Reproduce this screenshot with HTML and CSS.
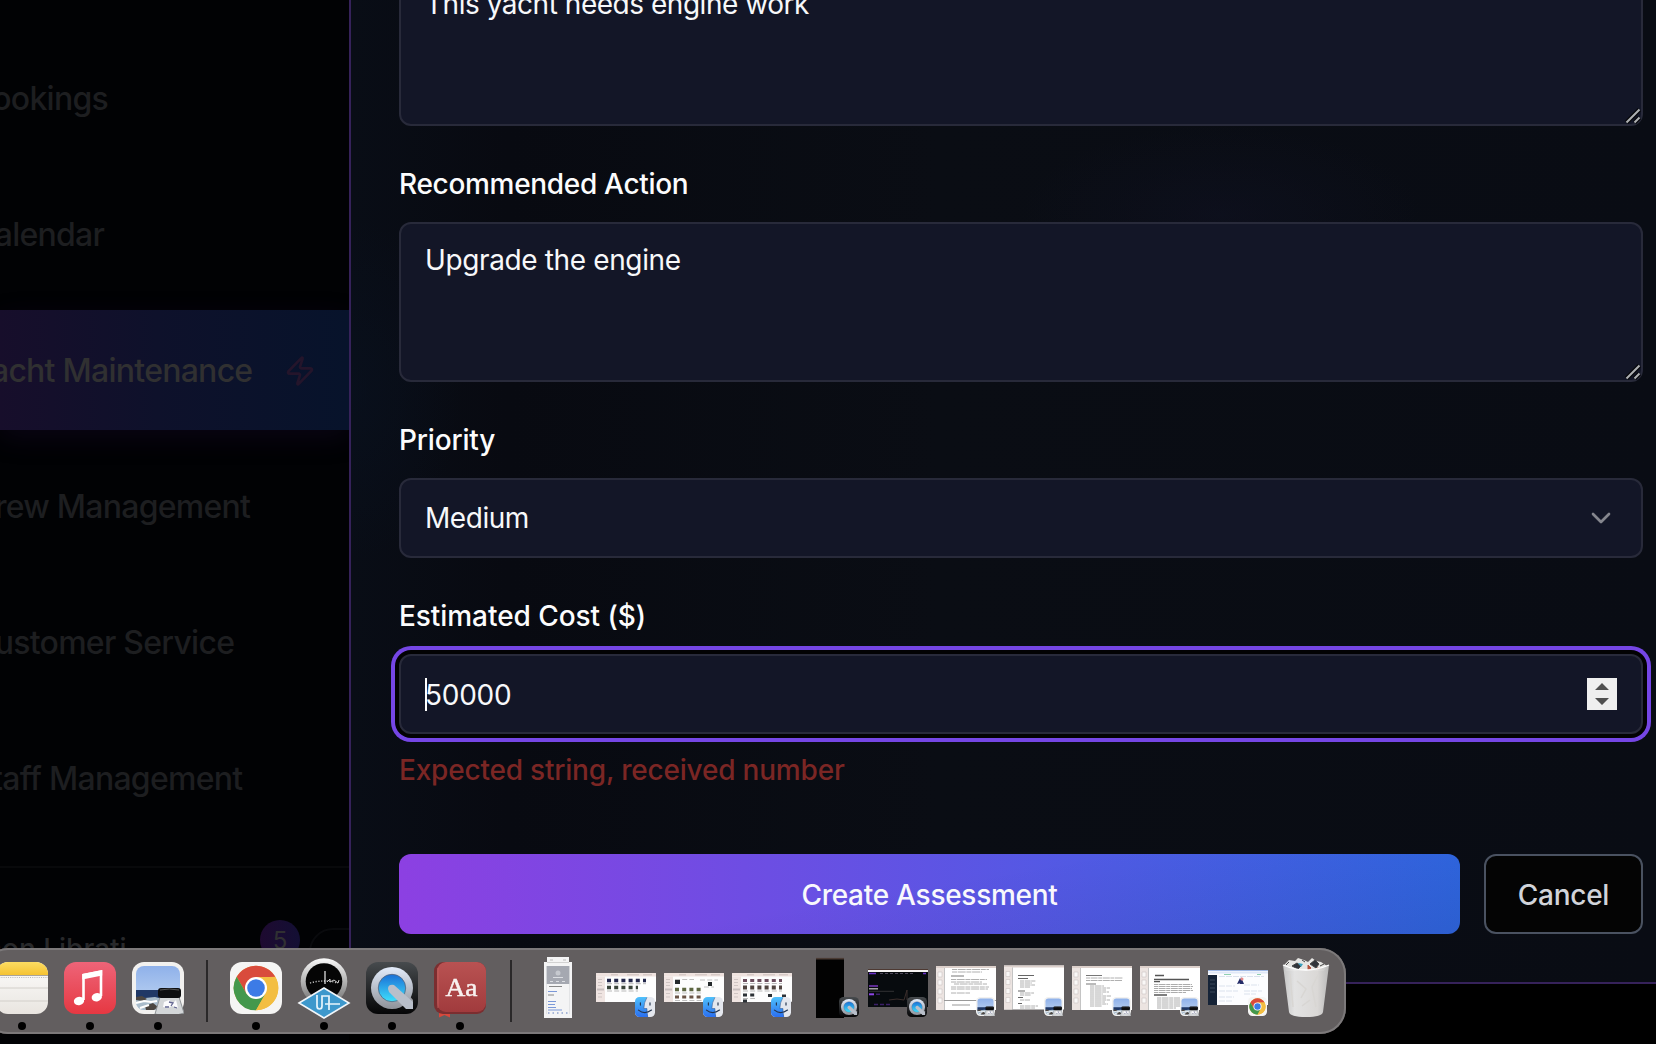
FILE: index.html
```html
<!DOCTYPE html>
<html lang="en">
<head>
<meta charset="utf-8">
<title>Yacht Maintenance</title>
<link rel="stylesheet" href="styles.css">
</head>
<body>
<svg class="defs" width="0" height="0" aria-hidden="true">
  <defs>
    <linearGradient id="gMusic" x1="0" y1="0" x2="0" y2="1"><stop offset="0" stop-color="#ee6478"/><stop offset="1" stop-color="#e63842"/></linearGradient>
    <linearGradient id="gNote" x1="0" y1="0" x2="0" y2="1"><stop offset="0" stop-color="#fcdc62"/><stop offset="1" stop-color="#f5c332"/></linearGradient>
    <linearGradient id="gPaper" x1="0" y1="0" x2="0" y2="1"><stop offset="0" stop-color="#fdfdfc"/><stop offset="1" stop-color="#e9e5e0"/></linearGradient>
    <linearGradient id="gSky" x1="0" y1="0" x2="0" y2="1"><stop offset="0" stop-color="#8fb1ea"/><stop offset="1" stop-color="#c3d8f2"/></linearGradient>
    <linearGradient id="gQtBg" x1="0" y1="0" x2="0" y2="1"><stop offset="0" stop-color="#474b4e"/><stop offset="1" stop-color="#050506"/></linearGradient>
    <linearGradient id="gQtRing" x1="0" y1="0" x2="0" y2="1"><stop offset="0" stop-color="#e3ecfb"/><stop offset="1" stop-color="#8f9299"/></linearGradient>
    <linearGradient id="gQtBlue" x1="0" y1="0" x2="0" y2="1"><stop offset="0" stop-color="#1a6fd6"/><stop offset="1" stop-color="#3fe0fb"/></linearGradient>
    <linearGradient id="gFinder" x1="0" y1="0" x2="0" y2="1"><stop offset="0" stop-color="#4fc1fb"/><stop offset="1" stop-color="#2a6ff0"/></linearGradient>
    <linearGradient id="gDial" x1="0" y1="0" x2="0" y2="1"><stop offset="0" stop-color="#fafafa"/><stop offset="1" stop-color="#6c6c6c"/></linearGradient>
    <linearGradient id="gBook" x1="0" y1="0" x2="0" y2="1"><stop offset="0" stop-color="#b95252"/><stop offset="1" stop-color="#a13b3d"/></linearGradient>
    <linearGradient id="gCan" x1="0" y1="0" x2="1" y2="0"><stop offset="0" stop-color="#c9c9c9"/><stop offset=".25" stop-color="#e8e8e8"/><stop offset=".75" stop-color="#dfdddb"/><stop offset="1" stop-color="#bdbdbd"/></linearGradient>

    <symbol id="chrome" viewBox="0 0 52 52">
      <rect width="52" height="52" rx="12" fill="#f5f5f4"/>
      <circle cx="26" cy="26" r="22.3" fill="#f3be42"/>
      <path d="M6.7 14.8A22.3 22.3 0 0 1 45.3 14.8L26 15.5 16 31z" fill="#d94b3c"/>
      <path d="M6.7 14.8A22.3 22.3 0 0 0 26 48.3L35.5 31.5 26 36.5 16.6 32z" fill="#43984c"/>
      <path d="M26 15H45.4A22.3 22.3 0 0 1 26 48.3L36 31z" fill="#f3be42"/>
      <circle cx="26" cy="26" r="11" fill="#fff"/><circle cx="26" cy="26" r="8.8" fill="#3c7be6"/>
    </symbol>
    <symbol id="preview" viewBox="0 0 52 52">
      <rect width="52" height="52" rx="12" fill="#f2f1ef"/>
      <rect x="4" y="4" width="44" height="44" rx="8" fill="url(#gSky)"/>
      <path d="M4 28H48V37H4z" fill="#203866"/>
      <path d="M4 35l9 1 10-1 8 2 17-1v4a8 8 0 0 1-8 8H12a8 8 0 0 1-8-8z" fill="#a9bccb"/>
      <path d="M4 35l6-1 5 3-4 2-7-1zM13 44l8-3 5 4-4 3h-8z" fill="#4c4641"/>
      <path d="M4 41l8-2 7 1 6-1M8 46l9-3" stroke="#fff" stroke-width="2" fill="none"/>
      <path d="M28 35h19l5 16q-14 5-29 1z" fill="#d3d6d8" stroke="#8f9396" stroke-width="1"/>
      <path d="M32 40l5-2 4 3 3-3 2 8-6-2-4 2-5-1z" fill="#fbfbfd"/><path d="M37 40l4 1-2 3M33 45h4M42 45l3 1" stroke="#626590" stroke-width="1.3" fill="none"/>
      <rect x="26" y="26" width="23" height="10" rx="3" fill="#0d0e10"/><path d="M28 28q9-2 19 0" stroke="#555" stroke-width="1" fill="none"/>
    </symbol>
    <symbol id="quicktime" viewBox="0 0 52 52">
      <rect width="52" height="52" rx="12" fill="url(#gQtBg)"/>
      <path d="M30 32l7-6 10 12v9h-6z" fill="#9a9ca2"/>
      <circle cx="26" cy="26" r="21" fill="url(#gQtRing)"/>
      <circle cx="26" cy="26" r="13.7" fill="url(#gQtBlue)" stroke="#56657c" stroke-width=".8"/>
      <path d="M22 27q0-5 6-4l19 17v7h-7L23 30z" fill="#b9bfca"/>
    </symbol>
    <symbol id="finder" viewBox="0 0 52 52">
      <rect width="52" height="52" rx="12" fill="#e4e7ee"/>
      <path d="M12 0H31Q23 14 23 30H31Q31 42 34 52H12A12 12 0 0 1 0 40V12A12 12 0 0 1 12 0z" fill="url(#gFinder)"/>
      <path d="M14 15v6M39 15v6M9 34Q25 47 43 34" stroke="#22334e" stroke-width="3" stroke-linecap="round" fill="none"/>
      <path d="M31 1Q23 15 23 30H31Q31 41 33 51" stroke="#345b94" stroke-width="1.5" fill="none"/>
    </symbol>
    <symbol id="grip" viewBox="0 0 16 16">
      <path d="M1.5 14.5L14.5 1.5M9.5 14.5l5-5" stroke="#07080c" stroke-width="4.5"/>
      <path d="M1.5 14.5L14.5 1.5M9.5 14.5l5-5" stroke="#aeb0b3" stroke-width="2"/>
    </symbol>
    <symbol id="window" viewBox="0 0 60 29">
      <rect width="60" height="29" rx="1" fill="#fdfdfd"/><path d="M0 1q0-1 1-1h58q1 0 1 1v2.5H0z" fill="#efe3df"/><path d="M0 3.500H9V29H0z" fill="#efe4e1"/>
      <path d="M2 6.500H6M2 9.500H6M2 12.500H6M2 20.500H6M2 24H6" stroke="#cfc5c3" stroke-width="1"/><path d="M1 16.500H8" stroke="#c8bfbe" stroke-width="2"/><path d="M15 1.800h7M31 1.800h12M47 1.800h9" stroke="#c2b7b4" stroke-width=".8"/>
    </symbol>
    <symbol id="doc" viewBox="0 0 60 44">
      <rect width="60" height="44" fill="#fff"/><path d="M0 0H60V2H0z" fill="#dcd0cb"/><path d="M0 2H8V44H0z" fill="#ece4e1"/><path d="M2 6h4v5H2zM2 14h4v5H2zM2 23h4v5H2zM2 32h4v5H2z" fill="#faf8f7" stroke="#cdc5c2" stroke-width=".6"/><path d="M8.500 2V44" stroke="#aaa" stroke-width=".7"/>
    </symbol>
  </defs>
</svg>

<div class="screen">
  <aside class="sidebar">
    <nav class="nav">
      <div class="nav-item">Bookings</div>
      <div class="nav-item">Calendar</div>
      <div class="nav-item active"><span>Yacht Maintenance</span>
        <svg class="zap" viewBox="0 0 24 24" fill="none" stroke="currentColor" stroke-width="2" stroke-linecap="round" stroke-linejoin="round"><path d="M4 14a1 1 0 0 1-.78-1.630l9.900-10.200a.5.5 0 0 1 .86.460l-1.920 6.020A1 1 0 0 0 13 10h7a1 1 0 0 1 .78 1.630l-9.900 10.200a.5.5 0 0 1-.86-.460l1.920-6.020A1 1 0 0 0 11 14z"/></svg>
      </div>
      <div class="nav-item">Crew Management</div>
      <div class="nav-item">Customer Service</div>
      <div class="nav-item">Staff Management</div>
    </nav>
    <div class="account">
      <span class="account-name">Simon Librati</span>
      <span class="count">5</span>
      <span class="pill"></span>
    </div>
  </aside>

  <main class="dialog">
    <div class="box area first">This yacht needs engine work<svg class="grip"><use href="#grip"/></svg></div>
    <div class="label action">Recommended Action</div>
    <div class="box area">Upgrade the engine<svg class="grip"><use href="#grip"/></svg></div>
    <div class="label priority">Priority</div>
    <div class="box line"><span>Medium</span>
      <svg class="chevron" viewBox="0 0 24 24" fill="none" stroke="#85868e" stroke-width="2" stroke-linecap="round" stroke-linejoin="round"><path d="m6 9 6 6 6-6"/></svg>
    </div>
    <div class="label">Estimated Cost ($)</div>
    <div class="box line focused"><span class="number">50000</span>
      <svg class="spinner" viewBox="0 0 30 32"><rect width="30" height="32" fill="#efefef"/><path d="M8 12l7-7 7 7zM8 20h14l-7 7z" fill="#505050"/></svg>
    </div>
    <p class="error">Expected string, received number</p>
    <div class="actions">
      <div class="button primary">Create Assessment</div>
      <div class="button secondary">Cancel</div>
    </div>
  </main>
</div>

<div class="dock">
  <svg class="app" viewBox="0 0 68 86"><rect x="8" y="14" width="52" height="52" rx="12" fill="url(#gPaper)"/><path d="M8 27V26A12 12 0 0 1 20 14H48A12 12 0 0 1 60 26V27z" fill="url(#gNote)"/><path d="M8 27.500H60" stroke="#a9a49b"/><path d="M9 29.500H60" stroke="#bbb" stroke-width="1.200" stroke-dasharray="1 1.200"/><path d="M8 40H60M8 53H60" stroke="#d2cfca"/><circle cx="34" cy="78" r="4"/></svg>
  <svg class="app" viewBox="0 0 68 86"><rect x="8" y="14" width="52" height="52" rx="12" fill="url(#gMusic)"/><path d="M27.500 52V27L45 23.500V48" stroke="#fff" stroke-width="2.600" fill="none"/><path d="M26.300 26L46.200 22V27.500L26.300 31.500z" fill="#fff"/><ellipse cx="23" cy="53" rx="5.200" ry="4.200" transform="rotate(-15 23 53)" fill="#fff"/><ellipse cx="40.800" cy="49.200" rx="5.200" ry="4.200" transform="rotate(-15 40.800 49.200)" fill="#fff"/><circle cx="34" cy="78" r="4"/></svg>
  <svg class="app" viewBox="0 0 68 86"><use href="#preview" x="8" y="14" width="52" height="52"/><circle cx="34" cy="78" r="4"/></svg>
  <span class="divider"></span>
  <svg class="app" viewBox="0 0 68 86"><use href="#chrome" x="8" y="14" width="52" height="52"/><circle cx="34" cy="78" r="4"/></svg>
  <svg class="app" viewBox="0 0 68 86"><circle cx="34" cy="33.500" r="23.300" fill="url(#gDial)"/><circle cx="34" cy="33.500" r="18.300" fill="#050505"/><path d="M20 35Q34 31 48 35" stroke="#bbb" stroke-width="1.400" stroke-dasharray="1.200 1.600" fill="none"/><path d="M35 23V36" stroke="#eee" stroke-width="1.200"/><path d="M37 34l3-3v3l4-2 4 3 1-3" stroke="#ccc" fill="none"/><path d="M9 55L34 40 59 55 34 70z" fill="#3d98cc" stroke="#f1f6fa" stroke-width="1.600"/><path d="M27 47V58Q27 61 29.500 61T32 58V48H39V62M35 56H50" stroke="#e8f5fc" stroke-width="1.700" fill="none"/><circle cx="34" cy="78" r="4"/></svg>
  <svg class="app" viewBox="0 0 68 86"><use href="#quicktime" x="8" y="14" width="52" height="52"/><circle cx="34" cy="78" r="4"/></svg>
  <svg class="app" viewBox="0 0 68 86"><path d="M13 60H24V69.500L18.500 67 13 69.500z" fill="#d8483c"/><rect x="8" y="14" width="52" height="52" rx="9" fill="#7b2e30"/><rect x="11" y="14" width="49" height="50" rx="9" fill="url(#gBook)"/><path d="M12 20V60" stroke="#c46663" stroke-width=".8"/><text x="35.500" y="48" text-anchor="middle" textLength="32" lengthAdjust="spacingAndGlyphs" class="book-text">Aa</text><circle cx="34" cy="78" r="4"/></svg>
  <span class="divider windows"></span>
  <svg class="app" viewBox="0 0 68 86"><path d="M23 9H45V14H48V70H20V14H23z" fill="#f4f4f5"/><path d="M23 14.500H45" stroke="#c9c9c9" stroke-width=".8"/><path d="M26 12H42" stroke="#bbb" stroke-dasharray="3 10"/><path d="M22.500 18H45.500V36H22.500z" fill="#a5a8b1"/><circle cx="34" cy="25" r="2.500" fill="#c6c9cf"/><path d="M29 29.500h10M26 33.500h3M32 33.500h3M38 33.500h3" stroke="#dcdee3"/><path d="M25 38.500H38M24 47H30" stroke="#888"/><path d="M24 43.500H33M24 53.500H32M24 56.500H31M24 59.500H32M24 62H38" stroke="#7b98d8"/><path d="M24 65H44" stroke="#8fa3d0" stroke-width="1.500" stroke-dasharray="1.500 3"/><path d="M22.500 18V66M45.500 18V66" stroke="#d6d8dc" stroke-width=".6"/></svg>
  <svg class="app" viewBox="0 0 68 86"><use href="#window" x="4" y="25" width="60" height="29"/><path d="M15 32.500H54" stroke="#22264a" stroke-width="3.500" stroke-dasharray="4 3.200"/><path d="M15 39.500H46" stroke="#3a443a" stroke-width="3.500" stroke-dasharray="4 3.200"/><path d="M15 35.700H54M15 43H46" stroke="#b9b9b9" stroke-dasharray="5 2.200"/><use href="#finder" x="43" y="49" width="20" height="20"/></svg>
  <svg class="app" viewBox="0 0 68 86"><use href="#window" x="4" y="25" width="60" height="29"/><path d="M15 34H20M48 36H52" stroke="#252a2c" stroke-width="4"/><path d="M15 41.500H41" stroke="#5d6641" stroke-width="3.500" stroke-dasharray="4 3.200"/><path d="M15 49H42" stroke="#6b5547" stroke-width="3" stroke-dasharray="4 3.200"/><path d="M15 31.500H34M40 32H58M15 45H41M15 52.500H42M44 39H54" stroke="#bfbfbf" stroke-dasharray="5 2.200"/><use href="#finder" x="43" y="49" width="20" height="20"/></svg>
  <svg class="app" viewBox="0 0 68 86"><use href="#window" x="4" y="25" width="60" height="29"/><path d="M15 32.500H54" stroke="#6b4c5c" stroke-width="3" stroke-dasharray="4 3.200"/><path d="M15 39.500H54" stroke="#514540" stroke-width="4" stroke-dasharray="4 3.200"/><path d="M15 47H27M15 53H20M40 47.500H44M54 48H58" stroke="#2c3136" stroke-width="3" stroke-dasharray="4 3.200"/><path d="M15 35.500H54M15 43H54M15 50.500H27" stroke="#b9b9b9" stroke-dasharray="5 2.200"/><use href="#finder" x="43" y="49" width="20" height="20"/></svg>
  <svg class="app" viewBox="0 0 68 86"><path d="M20 10H48V70H20z" fill="#020202"/><path d="M20 10.700H48" stroke="#4a3b33" stroke-width="1.600"/><use href="#quicktime" x="43" y="49" width="20" height="20"/></svg>
  <svg class="app" viewBox="0 0 68 86"><path d="M4 21H64V59H4z" fill="#070b0e"/><path d="M4 21.500H64" stroke="#4d3932"/><path d="M4 23H64" stroke="#f6f4f3" stroke-width="2"/><path d="M5 25.500h7M59 25.500h3" stroke="#6b31c9" stroke-width="1.500"/><path d="M16 25.500H50" stroke="#4d4858" stroke-dasharray="3 2"/><path d="M5 38H14" stroke="#5c2c92" stroke-width="2"/><path d="M5 40.800H14" stroke="#bbb" stroke-width="1.300"/><path d="M5 43.300H30" stroke="#444" stroke-width=".7"/><path d="M5 46.300H10" stroke="#8d44e7" stroke-width="2"/><path d="M12 46.300H18M10 56.500H28" stroke="#3b1f68" stroke-width="1.500" stroke-dasharray="4 2"/><path d="M25 52l8-1 7 1 3-10v10l10-1 7 2" stroke="#3b2e2c" fill="none"/><use href="#quicktime" x="43" y="49" width="20" height="20"/></svg>
  <svg class="app" viewBox="0 0 68 86"><use href="#doc" x="4" y="18" width="60" height="44"/><g stroke="#b0b0b0" stroke-dasharray="5 .7 8 .7"><path d="M20 21.500H57M20 24H50M19 31.500H55M19 34H50M22 36H55M19 39H57M19 41H56M19 45H38"/></g><path d="M19 28H32" stroke="#777"/><path d="M12 52.500H64" stroke="#999"/><path d="M20 57H38" stroke="#999"/><use href="#preview" x="44" y="49" width="19" height="19"/></svg>
  <svg class="app" viewBox="0 0 68 86"><use href="#doc" x="4" y="17" width="60" height="45"/><path d="M18 27.500H34M18 30.500H28M18 43H25M18 49.500H23M18 55.500H22" stroke="#666" stroke-width="1.200"/><path d="M20 33H36M20 35H32M20 37H35M20 39H30M20 45H34M20 47H31M20 52H30M20 58H38M20 60H35" stroke="#b0b0b0" stroke-dasharray="4 .6 6 .6"/><use href="#preview" x="44" y="49" width="19" height="19"/></svg>
  <svg class="app" viewBox="0 0 68 86"><use href="#doc" x="4" y="18" width="60" height="44"/><path d="M18 27.500H34M18 36H28" stroke="#777"/><path d="M18 30H55M18 32.500H54M22 38H36M22 40H42M22 42H38M22 44H41M22 46H35M22 48H43M22 50H38M22 52H42M22 54H37M22 56H40M22 58H34" stroke="#b0b0b0" stroke-dasharray="4 .6 7 .6"/><use href="#preview" x="44" y="49" width="19" height="19"/></svg>
  <svg class="app" viewBox="0 0 68 86"><use href="#doc" x="4" y="18" width="60" height="44"/><path d="M19 27.500H28M18 31.500H53M18 33.700H24M18 47H31" stroke="#555" stroke-width="1.300"/><path d="M18 36.500H56M18 38.500H57M18 40.500H56M18 42.500H57M18 44.500H50M21 50H44M21 52H44M21 54H44M21 56H44M21 58H44M21 60H40" stroke="#acacac" stroke-dasharray="4 .6 7 .6"/><use href="#preview" x="44" y="49" width="19" height="19"/></svg>
  <svg class="app" viewBox="0 0 68 86"><path d="M4 22H64V57H4z" fill="#fcfdff"/><path d="M4 22.500H64" stroke="#9db7e4"/><path d="M4 24.500H64" stroke="#dfe8f8" stroke-width="2"/><path d="M4 27H13V57H4z" fill="#152337"/><path d="M6 32h5M6 36h5M6 40h5M6 44h5" stroke="#3b485b"/><path d="M15 28.500H60M15 38H31M15 43H34M15 49H30M15 53H28M40 37H55M40 43H58M40 46H52" stroke="#dbe2ed" stroke-dasharray="6 1"/><path d="M20 26.500h7M53 26.500h4" stroke="#8fd0b0"/><path d="M33 36l3-6 2 5zM37 29l3 7h-4" fill="#242c68"/><circle cx="38" cy="31" r="1.500" fill="#e78a8a"/><use href="#chrome" x="44" y="49" width="19" height="19"/></svg>
  <svg class="app" viewBox="0 0 68 86"><path d="M12 17l5-5 6 1 3-3 6 2 4 2 4-4 4 3 5 1 6 4-3 5H14z" fill="#e6e5e3"/><path d="M20 18l5-3 4 3-3 3zM38 16l5-4 4 4-3 4zM14 17l3-3M30 12l3 2M48 18l4-2" fill="#30343a" stroke="#444" stroke-width="1"/><path d="M26 15l5 1-2 3z" fill="#38a0bf"/><path d="M36 17l3 3-3 2zM45 20l4 1" fill="#b4523d" stroke="#b4523d"/><path d="M11 17Q34 27 57 17L51 64Q50 69 34 69T17 64z" fill="url(#gCan)" fill-opacity=".96"/><path d="M11 17Q34 27 57 17" stroke="#fff" stroke-width="1.300" fill="none"/><path d="M18 26l3 33M25 33l9 8-5 9M46 27l-6 12 4 20M30 58l8-6" stroke="#d8d6d3" stroke-width="1.500" fill="none"/></svg>
</div>
</body>
</html>
```

FILE: styles.css
```css
* { box-sizing: border-box; }

body {
  margin: 0;
  background: #000;
  font-family: Inter, "Liberation Sans", sans-serif;
  overflow: hidden;
}

.defs { position: absolute; }

.screen {
  display: flex;
  width: 1656px;
  height: 1044px;
  overflow: hidden;
}

/* Dimmed sidebar behind the dialog */
.sidebar {
  width: 349px;
  flex: none;
  height: 1044px;
  background: #010204;
  overflow: hidden;
}

.nav {
  display: flex;
  flex-direction: column;
  gap: 16px;
  height: 866px;
  padding-top: 38px;
}

.nav-item {
  display: flex;
  align-items: center;
  justify-content: space-between;
  flex: none;
  height: 120px;
  padding: 1px 33px 0 0;
  text-indent: -28px;
  font-size: 32px;
  font-weight: 500;
  letter-spacing: -.74px;
  white-space: nowrap;
  color: #1d1e20;
}

.active {
  color: #303031;
  background: linear-gradient(90deg, #170e2b, #0e112b 45%, #07132b);
  box-shadow: 0 8px 26px rgba(50, 20, 85, .2);
}

.zap { width: 32px; height: 32px; color: #24152b; }

.account {
  display: flex;
  align-items: flex-start;
  height: 178px;
  border-top: 2px solid #08090b;
}

.account-name {
  flex: none;
  width: 260px;
  margin-top: 61px;
  text-indent: -48px;
  font-size: 28px;
  line-height: 40px;
  font-weight: 500;
  white-space: nowrap;
  color: #28292b;
}

.count {
  flex: none;
  width: 40px;
  height: 40px;
  margin-top: 52px;
  border-radius: 50%;
  background: linear-gradient(90deg, #1e0a30, #130f34);
  font-size: 24px;
  line-height: 41px;
  text-align: center;
  color: #303032;
}

.pill {
  flex: none;
  width: 90px;
  height: 64px;
  margin: 60px 0 0 9px;
  border: 2px solid #090a0d;
  border-radius: 24px;
}

/* Assessment form */
.dialog {
  flex: 1;
  height: 984px;
  padding: 0 13px 48px 48px;
  border-left: 2px solid #36225a;
  border-bottom: 2px solid #36225a;
  background:
    radial-gradient(ellipse 200px 90px at 870px 215px, rgba(16, 18, 36, .5), transparent),
    radial-gradient(ellipse 110px 170px at 0 390px, rgba(9, 18, 34, .5), transparent),
    linear-gradient(90deg, #090d16, #080a11 12%, #0a0d14 45%, #090c14);
}

.box {
  position: relative;
  width: 1244px;
  padding: 16px 24px;
  border: 2px solid #282a3a;
  border-radius: 12px;
  background: #131627;
  font-size: 28px;
  line-height: 41px;
  letter-spacing: -.37px;
  color: #f7f8fa;
}

.area { height: 160px; }
.first { margin-top: -34px; letter-spacing: -.47px; }

.grip {
  position: absolute;
  right: 0;
  bottom: 0;
  width: 16px;
  height: 16px;
}

.line {
  display: flex;
  align-items: center;
  justify-content: space-between;
  height: 80px;
  letter-spacing: -.45px;
}

.label {
  height: 96px;
  padding-top: 38px;
  font-size: 28px;
  line-height: 41px;
  font-weight: 500;
  letter-spacing: -.06px;
  color: #fcfcfd;
}

.action { letter-spacing: -.31px; }
.priority { letter-spacing: -.18px; }

.chevron { width: 32px; height: 32px; }
.spinner { width: 30px; height: 32px; }

.focused {
  letter-spacing: -.25px;
  box-shadow: 0 0 0 4px #020203, 0 0 0 8px #7546e5;
}

.number { padding-top: 2px; }

.number::before {
  content: "";
  position: absolute;
  left: 24px;
  top: 22px;
  width: 2px;
  height: 33px;
  background: #fff;
}

.error {
  height: 40px;
  margin: 16px 0 64px;
  font-size: 28px;
  line-height: 41px;
  font-weight: 500;
  letter-spacing: -.2px;
  color: #7b2624;
}

.actions { display: flex; gap: 24px; }

.button {
  display: flex;
  align-items: center;
  justify-content: center;
  height: 80px;
  padding-top: 1px;
  border-radius: 12px;
  font-size: 28px;
  font-weight: 500;
  letter-spacing: -.27px;
}

.primary {
  width: 1061px;
  color: #f8f8fc;
  background:
    linear-gradient(170deg, transparent 45%, rgba(8, 10, 20, .1)),
    linear-gradient(90deg, #8c40e2, #3068e5);
}

.secondary {
  width: 159px;
  border: 2px solid #4a5261;
  background: #040404;
  color: #d1d4da;
}

/* Dock floats over the page */
.dock {
  position: fixed;
  left: -18px;
  top: 948px;
  display: flex;
  width: 1364px;
  height: 86px;
  padding-left: 6px;
  border-radius: 26px;
  background: #625e5f;
  box-shadow: inset 0 0 0 2px #7c797a;
}

.app { flex: none; width: 68px; height: 86px; }

.divider {
  flex: none;
  width: 2px;
  height: 62px;
  margin: 12px 14px;
  background: #2a2829;
}

.windows { margin: 12px 12px 12px 16px; }

.book-text {
  font: 26px "Liberation Serif", serif;
  fill: #f8f1ef;
  stroke: #f8f1ef;
  stroke-width: .5px;
}
```
